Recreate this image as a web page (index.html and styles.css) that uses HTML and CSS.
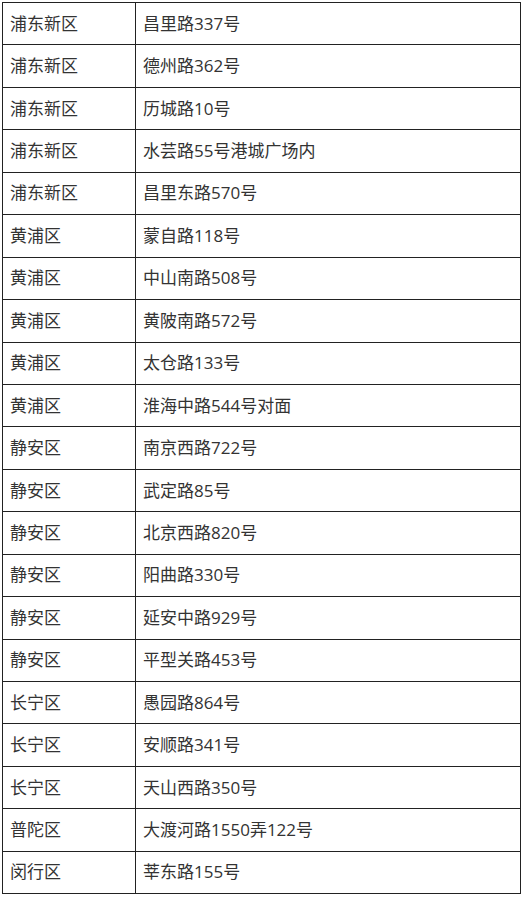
FILE: index.html
```html
<!DOCTYPE html>
<html lang="zh-CN">
<head>
<meta charset="utf-8">
<link rel="stylesheet" href="styles.css">
</head>
<body>
<table class="addr">
<tbody>
<tr><td class="d">浦东新区</td><td class="a">昌里路337号</td></tr>
<tr><td class="d">浦东新区</td><td class="a">德州路362号</td></tr>
<tr><td class="d">浦东新区</td><td class="a">历城路10号</td></tr>
<tr><td class="d">浦东新区</td><td class="a">水芸路55号港城广场内</td></tr>
<tr><td class="d">浦东新区</td><td class="a">昌里东路570号</td></tr>
<tr><td class="d">黄浦区</td><td class="a">蒙自路118号</td></tr>
<tr><td class="d">黄浦区</td><td class="a">中山南路508号</td></tr>
<tr><td class="d">黄浦区</td><td class="a">黄陂南路572号</td></tr>
<tr><td class="d">黄浦区</td><td class="a">太仓路133号</td></tr>
<tr><td class="d">黄浦区</td><td class="a">淮海中路544号对面</td></tr>
<tr><td class="d">静安区</td><td class="a">南京西路722号</td></tr>
<tr><td class="d">静安区</td><td class="a">武定路85号</td></tr>
<tr><td class="d">静安区</td><td class="a">北京西路820号</td></tr>
<tr><td class="d">静安区</td><td class="a">阳曲路330号</td></tr>
<tr><td class="d">静安区</td><td class="a">延安中路929号</td></tr>
<tr><td class="d">静安区</td><td class="a">平型关路453号</td></tr>
<tr><td class="d">长宁区</td><td class="a">愚园路864号</td></tr>
<tr><td class="d">长宁区</td><td class="a">安顺路341号</td></tr>
<tr><td class="d">长宁区</td><td class="a">天山西路350号</td></tr>
<tr><td class="d">普陀区</td><td class="a">大渡河路1550弄122号</td></tr>
<tr><td class="d">闵行区</td><td class="a">莘东路155号</td></tr>
</tbody>
</table>
</body>
</html>
```
FILE: styles.css
```css
html, body {
  margin: 0;
  padding: 0;
  background: #fff;
}
body {
  padding: 2px;
  font-family: "Open Sans", "Noto Sans CJK SC", sans-serif;
  font-size: 17px;
  color: #333;
}
.addr {
  border-collapse: collapse;
  width: 519px;
  table-layout: fixed;
}
.addr tr {
  height: 42.45px;
}
.addr td {
  border: 1px solid #222;
  padding: 0 7px;
  vertical-align: middle;
  line-height: 20px;
  white-space: nowrap;
}
.addr td.d {
  width: 118px;
}
```
